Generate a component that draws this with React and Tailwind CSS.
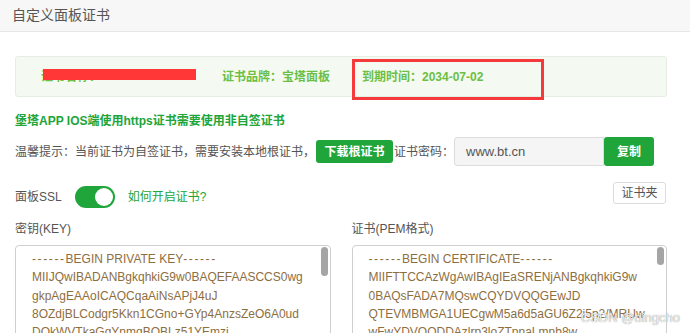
import React from "react"

const font = { fontFamily: '"Liberation Sans", "Noto Sans CJK SC", sans-serif' }

const keyLines = [
    "MIIJQwIBADANBgkqhkiG9w0BAQEFAASCCS0wg",
    "gkpAgEAAoICAQCqaAiNsAPjJ4uJ",
    "8OZdjBLCodgr5Kkn1CGno+GYp4AnzsZeO6A0ud",
    "DQkWVTkaGqYnmqBQBLz51YEmzi",
    "Q1o0Rk2mVb",
]

const certLines = [
    "MIIFTTCCAzWgAwIBAgIEaSRENjANBgkqhkiG9w",
    "0BAQsFADA7MQswCQYDVQQGEwJD",
    "QTEVMBMGA1UECgwM5a6d5aGU6Z2i5p2/MRUw",
    "wFwYDVQQDDAzlrp3loZTpnaLmnb8w",
    "HhcNMjQwNzAy",
]

function PemBox({ title, lines, thumbH }) {
    return (
        <div className="relative h-[100px] overflow-hidden rounded-t-[4px] border border-[#cfcfcf] bg-white pl-4 pt-[4px] text-[12px] leading-[18.3px] text-[#8d6e3f]">
            <div className="whitespace-nowrap">
                <span className="tracking-[1.6px]">------</span>BEGIN {title}
                <span className="tracking-[1.6px]">------</span>
            </div>
            {lines.map((l) => (
                <div key={l} className="whitespace-nowrap">{l}</div>
            ))}
            <div className={`absolute right-[2px] top-[1px] w-[7px] rounded-full bg-[#a5a5a5] ${thumbH}`} />
        </div>
    )
}

export default function App() {
    return (
        <div className="relative h-[333px] w-[690px] overflow-hidden bg-white text-[12px] text-[#555]" style={font}>
            {/* header */}
            <div className="flex h-[32px] items-center border-b border-[#e6e6e6] bg-[#f7f7f7] pl-[12px] text-[14px] text-[#555]">
                自定义面板证书
            </div>

            <div className="px-[15px] pr-[23px]">
                {/* cert info banner */}
                <div className="relative mt-[24px] flex h-[41px] items-center rounded-[3px] border border-[#e5eee3] bg-[#f4faf1] pl-[25px] font-bold text-[#6cbf45]">
                    <span className="relative w-[181px]">
                        证书名称：
                        <span className="absolute left-[2px] top-[1px] h-[11px] w-[153px] bg-[#ff3737]" />
                    </span>
                    <span className="w-[140px]">证书品牌：宝塔面板</span>
                    <span>到期时间：2034-07-02</span>
                    <div className="absolute left-[336px] top-[2px] h-[41px] w-[192px] border-[3px] border-[#f43a3a]" />
                </div>

                <div className="mt-[15px] font-bold text-[#20a53a]">堡塔APP IOS端使用https证书需要使用非自签证书</div>

                {/* tip row */}
                <div className="mt-[7px] flex items-center">
                    <span>温馨提示：当前证书为自签证书，需要安装本地根证书，</span>
                    <button className="ml-[1px] h-[23px] w-[77px] rounded-[3px] bg-[#20a53a] font-bold text-white">下载根证书</button>
                    <span className="ml-[1px]">证书密码：</span>
                    <div className="flex h-[29px] w-[150px] items-center rounded-l-[3px] border border-[#dcdcdc] bg-[#f5f5f5] pl-[11px] text-[13px] text-[#555]">
                        www.bt.cn
                    </div>
                    <button className="h-[29px] w-[50px] rounded-[3px] bg-[#20a53a] font-bold text-white">复制</button>
                </div>

                {/* ssl row */}
                <div className="mt-[16px] flex items-start justify-between">
                    <div className="mt-[4px] flex items-center">
                        <span>面板SSL</span>
                        <div className="ml-[13px] flex h-[22px] w-[40px] items-center justify-end rounded-full bg-[#20a53a] pr-[2px]">
                            <div className="h-[18px] w-[18px] rounded-full bg-white" />
                        </div>
                        <span className="ml-[13px] text-[#20a53a]">如何开启证书?</span>
                    </div>
                    <button className="mr-[1px] h-[22px] w-[53px] rounded-[3px] border border-[#dcdcdc] bg-white text-[#555]">证书夹</button>
                </div>

                {/* pem boxes */}
                <div className="mt-[13px] grid grid-cols-2 gap-[21px]">
                    <div>
                        <div className="mb-[8px] leading-[16px]">密钥(KEY)</div>
                        <PemBox title="PRIVATE KEY" lines={keyLines} thumbH="h-[29px]" />
                    </div>
                    <div>
                        <div className="mb-[8px] leading-[16px]">证书(PEM格式)</div>
                        <PemBox title="CERTIFICATE" lines={certLines} thumbH="h-[18px]" />
                    </div>
                </div>
            </div>

            {/* watermark */}
            <div className="absolute bottom-[6px] right-[10px] text-[13px] text-[#f0f0f0] [text-shadow:0_0_1px_#777]">
                CSDN @dingcho
            </div>
        </div>
    )
}
